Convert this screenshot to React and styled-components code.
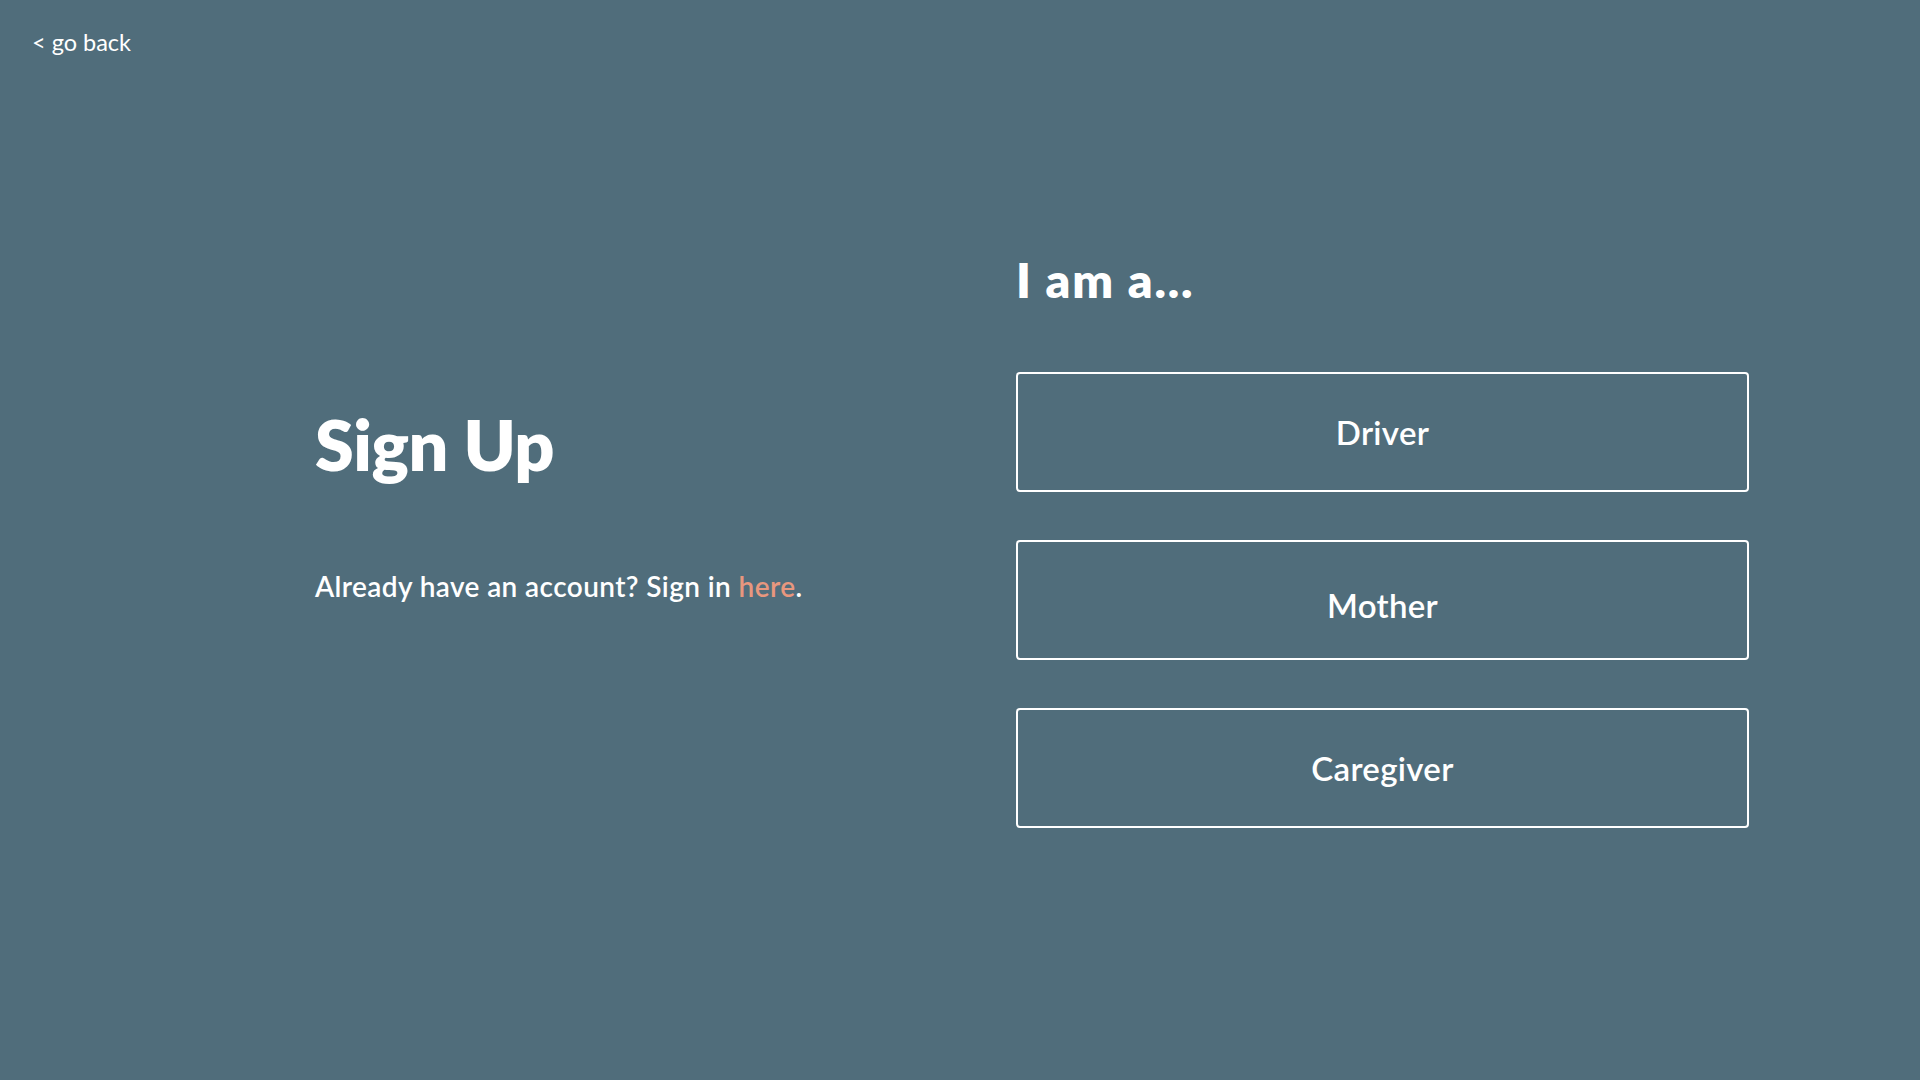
import React from "react";
import styled, { createGlobalStyle } from "styled-components";

const GlobalStyle = createGlobalStyle`
  html, body {
    margin: 0;
    padding: 0;
    background: #506d7b;
  }
  body {
    font-family: Lato, "Open Sans", "Liberation Sans", sans-serif;
    color: #ffffff;
  }
  * { box-sizing: border-box; }
`;

const Page = styled.div`
  min-height: 100vh;
  display: flex;
  flex-direction: column;
  background: #506d7b;
`;

const BackLink = styled.a`
  align-self: flex-start;
  margin: 31px 0 0 32px;
  font-size: 23.5px;
  line-height: 1;
  font-weight: 400;
  color: #ffffff;
  text-decoration: none;
  cursor: pointer;
`;

const Main = styled.main`
  display: grid;
  grid-template-columns: 701px 733px;
  padding-left: 315px;
  margin-top: 201px;
`;

const LeftCol = styled.section`
  display: flex;
  flex-direction: column;
  padding-top: 153px;
`;

const Title = styled.h1`
  margin: 0;
  font-size: 70px;
  line-height: 1;
  font-weight: 800;
  letter-spacing: -0.5px;
`;

const SignInText = styled.p`
  margin: 93px 0 0;
  font-size: 28px;
  line-height: 1;
  font-weight: 600;
  letter-spacing: 0.4px;
`;

const HereLink = styled.a`
  color: #e8977e;
  text-decoration: none;
  cursor: pointer;
`;

const RightCol = styled.section`
  display: flex;
  flex-direction: column;
`;

const Question = styled.h2`
  margin: 0 0 68px;
  font-size: 48px;
  line-height: 1;
  font-weight: 800;
  letter-spacing: 1.8px;
`;

const Options = styled.div`
  display: flex;
  flex-direction: column;
  gap: 48px;
`;

const RoleButton = styled.button`
  height: 120px;
  width: 100%;
  display: flex;
  align-items: center;
  justify-content: center;
  background: transparent;
  border: 2px solid #ffffff;
  border-radius: 4px;
  color: #ffffff;
  font-family: inherit;
  font-size: 33px;
  font-weight: 600;
  letter-spacing: 0.3px;
  cursor: pointer;
  padding: ${(p) => p.$offset || 0}px 0 0;
`;

const roles = [
  { label: "Driver" },
  { label: "Mother", offset: 10 },
  { label: "Caregiver" },
];

export default function App() {
  return (
    <>
      <GlobalStyle />
      <Page>
        <BackLink>&lt; go back</BackLink>
        <Main>
          <LeftCol>
            <Title>Sign Up</Title>
            <SignInText>
              Already have an account? Sign in <HereLink>here</HereLink>.
            </SignInText>
          </LeftCol>
          <RightCol>
            <Question>I am a...</Question>
            <Options>
              {roles.map((r) => (
                <RoleButton key={r.label} $offset={r.offset}>
                  {r.label}
                </RoleButton>
              ))}
            </Options>
          </RightCol>
        </Main>
      </Page>
    </>
  );
}
